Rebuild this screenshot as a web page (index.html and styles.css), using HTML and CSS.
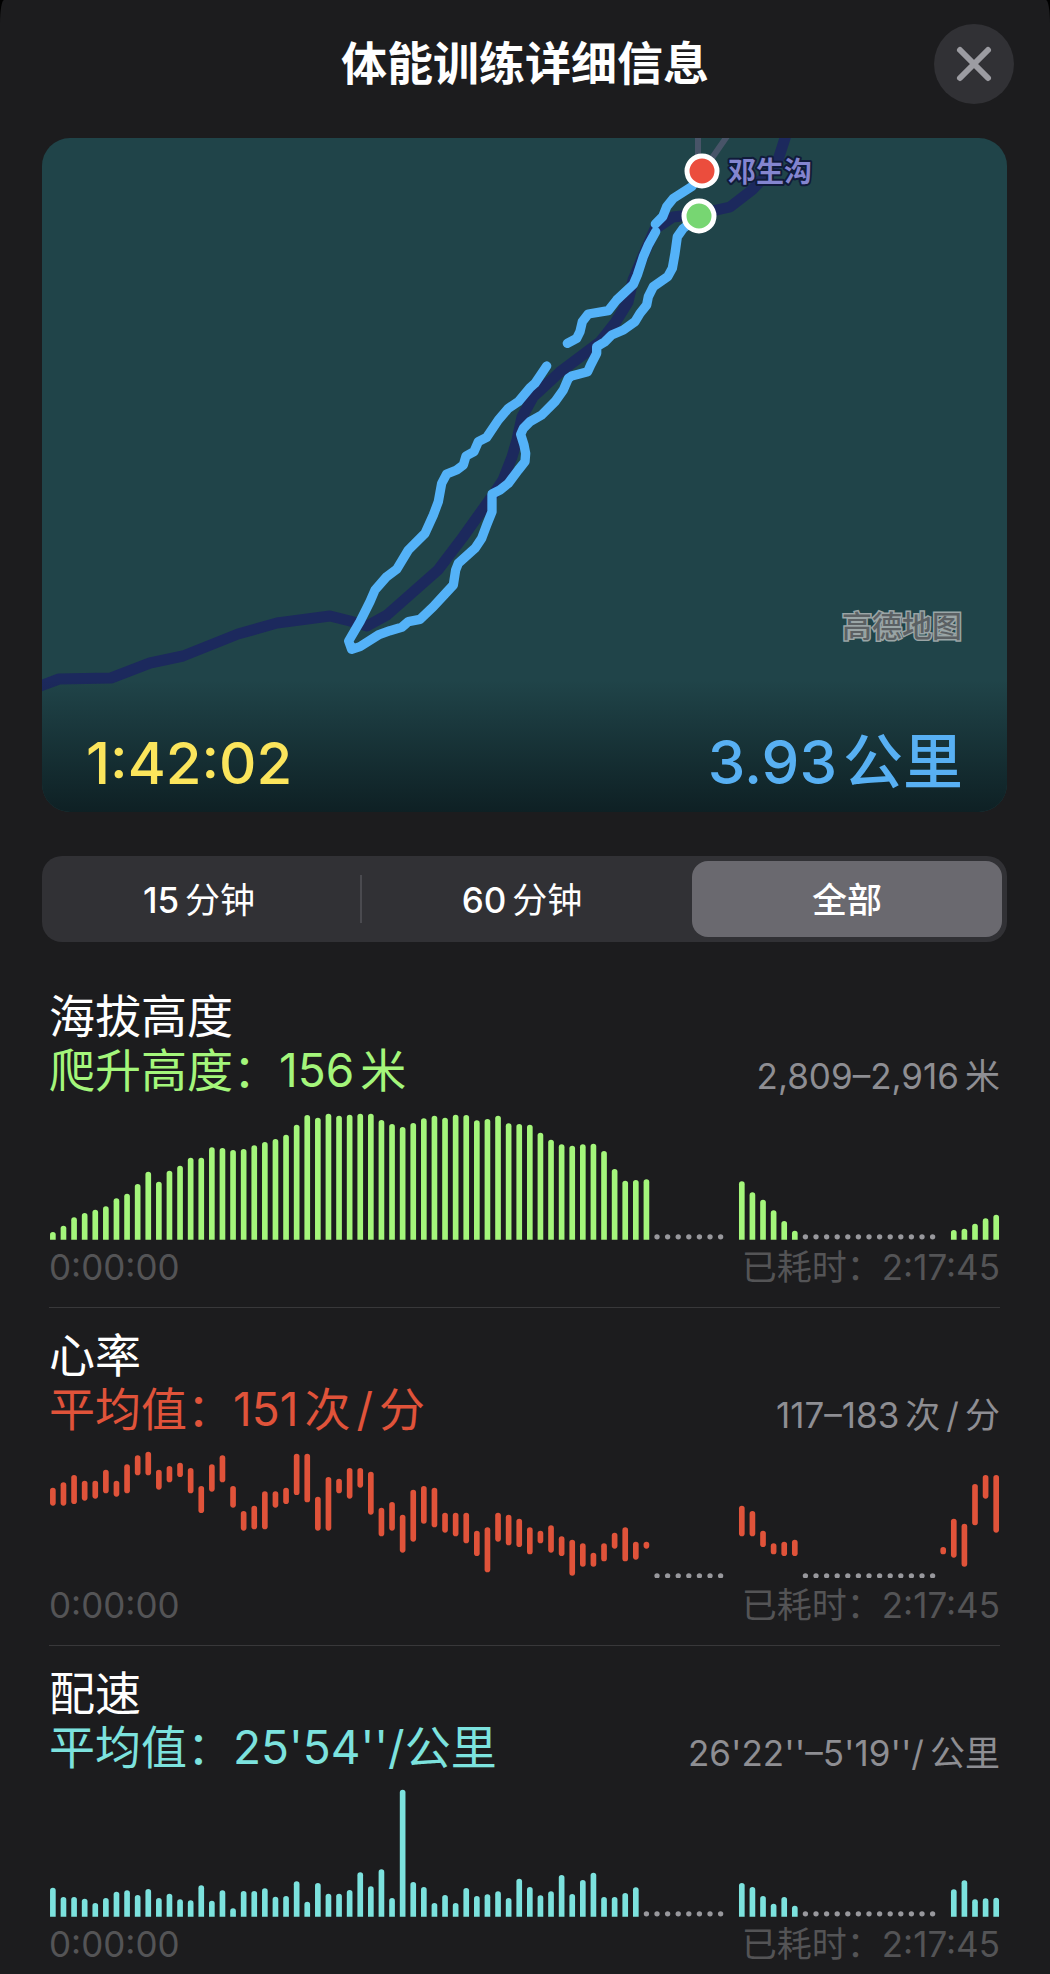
FILE: index.html
```html
<!DOCTYPE html>
<html lang="zh-CN">
<head>
<meta charset="utf-8">
<meta name="viewport" content="width=device-width, initial-scale=1">
<title>体能训练详细信息</title>
<link rel="stylesheet" href="styles.css">
</head>
<body>
<main class="sheet">
  <header class="header">
    <h1 class="header-title">体能训练详细信息</h1>
    <button class="close" type="button" aria-label="关闭">
      <svg viewBox="0 0 80 80" aria-hidden="true"><path d="M26 26 54 54M54 26 26 54"/></svg>
    </button>
  </header>

  <section class="map" aria-label="路线">
    <svg class="map-canvas" viewBox="42 138 965 674" aria-hidden="true">
      <g class="lane">
        <path d="M698 130V158M730 132 712 158"/>
      </g>
      <path class="road" d="M787 132 777 163 752 190 730 207 699 214 673 217 655 229 644 254 633 280 628 302 615 323 600 342 560 372 533 397 522 417 517 440 512 457 503 480 493 495 463 537 438 570 387 615 367 626 350 621 330 616 277 623 238 634 183 656 150 663 111 678 59 679 38 687"/>
      <g class="track" transform="translate(500 120) scale(.33333)">
        <path d="M598 288 550 325 532 350 525 400 517 445 503 470 460 500 445 530 440 555 420 580 405 605 370 630 335 645 315 665 290 680 290 700 272 735 263 755 215 768 205 775 190 810 165 845 125 885 90 905 70 925 62 943 72 975 77 1000 75 1025 55 1050 25 1090 0 1110-24 1122-24 1175-40 1215-55 1255-75 1285-125 1330-133 1350-140 1395-165 1422-200 1460-240 1498-275 1505-295 1522-330 1532-365 1545-420 1580-445 1588-454 1563-420 1505-390 1445-375 1410-340 1370-310 1348-275 1290-225 1240-200 1185-185 1145-175 1090-160 1062-130 1050-110 1035-102 1008-78 995-65 965-40 952-5 900 25 865 55 845 90 803 105 790 140 738"/>
        <path d="M202 670 230 655 240 635 247 605 265 582 325 572 350 540 400 493 412 465 430 410 445 375 467 335"/>
        <path d="M466 312 488 290 500 260 520 235 575 200 605 153"/>
      </g>
      <g class="pin">
        <circle class="pin-end" cx="702" cy="171" r="15"/>
        <circle class="pin-start" cx="699" cy="216" r="15"/>
      </g>
      <text class="place" x="728" y="182">邓生沟</text>
      <text class="credit" x="842" y="637">高德地图</text>
    </svg>
    <div class="map-stats">
      <span class="duration">1:42:02</span>
      <span class="distance">3.93<span class="unit">公里</span></span>
    </div>
  </section>

  <div class="segments" role="group" aria-label="时间范围">
    <button class="segment" type="button" aria-pressed="false">15<span class="unit">分钟</span></button>
    <button class="segment" type="button" aria-pressed="false">60<span class="unit">分钟</span></button>
    <button class="segment selected" type="button" aria-pressed="true">全部</button>
  </div>

  <section class="metric elevation">
    <h2 class="metric-title">海拔高度</h2>
    <div class="metric-row">
      <p class="metric-value">爬升高度：156<span class="unit">米</span></p>
      <p class="metric-range">2,809–2,916<span class="unit">米</span></p>
    </div>
    <svg class="chart" data-series="elevation" role="img" aria-label="海拔高度图表"></svg>
    <div class="metric-time"><span>0:00:00</span><span>已耗时：2:17:45</span></div>
  </section>

  <section class="metric heart">
    <h2 class="metric-title">心率</h2>
    <div class="metric-row">
      <p class="metric-value">平均值：151<span class="unit">次</span><span class="unit">/</span><span class="unit">分</span></p>
      <p class="metric-range">117–183<span class="unit">次</span><span class="unit">/</span><span class="unit">分</span></p>
    </div>
    <svg class="chart" data-series="heart" role="img" aria-label="心率图表"></svg>
    <div class="metric-time"><span>0:00:00</span><span>已耗时：2:17:45</span></div>
  </section>

  <section class="metric pace">
    <h2 class="metric-title">配速</h2>
    <div class="metric-row">
      <p class="metric-value">平均值：25'54''/公里</p>
      <p class="metric-range">26'22''–5'19''/<span class="unit">公里</span></p>
    </div>
    <svg class="chart" data-series="pace" role="img" aria-label="配速图表"></svg>
    <div class="metric-time"><span>0:00:00</span><span>已耗时：2:17:45</span></div>
  </section>
</main>
<script src="charts.js"></script>
</body>
</html>
```
FILE: styles.css
```css
* {
  box-sizing: border-box;
}

body {
  margin: 0;
  background: #000;
  color: #fff;
  font-family: Inter, "Noto Sans CJK SC", sans-serif;
}

h1,
h2,
p {
  margin: 0;
  font-weight: 400;
}

button {
  border: 0;
  padding: 0;
  color: inherit;
  font: inherit;
}

.sheet {
  min-height: 100vh;
  background: #1c1c1e;
  border-radius: 4px 4px 0 0 / 24px 24px 0 0;
  overflow: hidden;
}

.header {
  display: grid;
  grid-template-columns: 80px 1fr 80px;
  padding: 24px 36px 34px;
}

.header-title {
  grid-column: 2;
  text-align: center;
  font-size: 46px;
  line-height: 78px;
  font-weight: 700;
}

.close {
  width: 80px;
  height: 80px;
  border-radius: 50%;
  background: #313135;
}

.close svg {
  display: block;
  fill: none;
  stroke: #9c9ca2;
  stroke-width: 6;
  stroke-linecap: round;
}

.map {
  position: relative;
  margin: 0 43px 0 42px;
  border-radius: 28px;
  overflow: hidden;
  background: #204449;
}

.map-canvas {
  display: block;
  width: 100%;
}

.lane,
.road,
.track {
  fill: none;
  stroke-linejoin: round;
}

.lane {
  stroke: #485468;
  stroke-width: 6;
}

.road {
  stroke: #1c295d;
  stroke-width: 11;
}

.track {
  stroke: #54b2f8;
  stroke-width: 28;
  stroke-linecap: round;
}

.pin {
  stroke: #fff;
  stroke-width: 5;
}

.pin-end {
  fill: #eb4d3d;
}

.pin-start {
  fill: #77d672;
}

.place {
  font-size: 28px;
  font-weight: 700;
  fill: #8485cf;
  stroke: #101b3a;
  stroke-width: 4;
  stroke-linejoin: round;
  paint-order: stroke;
}

.credit {
  font-size: 30px;
  font-weight: 500;
  fill: #5b6063;
  stroke: #9aa5a6;
  stroke-width: 3;
  paint-order: stroke;
}

.map-stats {
  position: absolute;
  inset: auto 0 0;
  display: flex;
  justify-content: space-between;
  align-items: baseline;
  padding: 46px 44px 13px;
  font-size: 60px;
  line-height: 72px;
  font-weight: 500;
  background: linear-gradient(#20444900, #0e2024);
}

.duration {
  color: #fbe55c;
  font-size: 58px;
}

.distance {
  color: #58b0f3;
}

.unit {
  margin-left: 6px;
}

.segments {
  display: grid;
  grid-template-columns: repeat(3, 1fr);
  margin: 44px 43px 27px 42px;
  padding: 5px 5px 5px 0;
  border-radius: 20px;
  background: #313135;
}

.segment {
  position: relative;
  height: 76px;
  padding-bottom: 4px;
  background: none;
  font-size: 35px;
  font-weight: 500;
}

.segment .unit {
  font-weight: 400;
}

.segment:first-child {
  padding-right: 6px;
}

.segment:first-child::after {
  content: "";
  position: absolute;
  inset: 14px 0;
  left: auto;
  width: 2px;
  background: #4a4a4f;
}

.segment.selected {
  margin-left: 10px;
  border-radius: 16px;
  background: #6a696f;
}

.metric {
  margin: 0 50px 0 49px;
  padding: 20px 0 19px;
  border-bottom: 1px solid #38383a;
}

.metric:last-child {
  padding-bottom: 8px;
  border-bottom: 0;
}

.metric-title,
.metric-value {
  font-size: 46px;
  line-height: 54px;
}

.metric-row {
  display: flex;
  justify-content: space-between;
  align-items: flex-end;
}

.metric-range {
  color: #8e8e93;
  font-size: 35px;
  line-height: 42px;
}

.metric-time {
  display: flex;
  justify-content: space-between;
  color: #545456;
  font-size: 35px;
  line-height: 42px;
}

.chart {
  display: block;
  width: 100%;
  margin: 10px 0 6px;
  fill: currentColor;
}

.chart-gap {
  fill: #98989d;
}

.elevation .metric-value,
.elevation .chart {
  color: #a4f67b;
}

.heart .metric-value,
.heart .chart {
  color: #e0533a;
}

.pace .metric-value,
.pace .chart {
  color: #7ce2de;
}
```
FILE: charts.js
```js
// Each run is [first slot, samples]; a sample is a bar top, or [top, bottom] for a range.
// Each gap is [first slot, last slot] and is drawn as a dotted line.
const SERIES = {
  elevation: {
    baseline: 780,
    gaps: [[57, 63], [71, 83]],
    runs: [
      [0, [757, 738, 713, 700, 690, 680, 656, 642, 613, 576, 606, 573, 558, 534, 534, 503, 505, 511, 508, 497, 487, 478, 465, 435, 406, 414, 402, 408, 405, 402, 402, 421, 433, 442, 430, 416, 408, 414, 405, 406, 422, 418, 408, 431, 433, 435, 459, 480, 494, 498, 494, 492, 514, 568, 603, 601, 599]],
      [65, [605, 638, 660, 692, 724, 753]],
      [85, [751, 747, 732, 716, 705]]
    ]
  },
  heart: {
    baseline: 777,
    gaps: [[57, 63], [71, 83]],
    runs: [
      [0, [[504, 558], [488, 558], [466, 553], [483, 543], [483, 537], [450, 521], [483, 531], [434, 521], [407, 467], [396, 467], [450, 510], [439, 488], [429, 472], [445, 521], [499, 580], [434, 516], [407, 488], [499, 564], [574, 633], [558, 629], [515, 629], [515, 564], [504, 553], [402, 526], [402, 548], [531, 633], [472, 633], [477, 521], [445, 537], [445, 504], [456, 585], [564, 650], [547, 633], [585, 699], [510, 666], [499, 612], [504, 623], [579, 639], [579, 650], [579, 671], [633, 709], [623, 758], [579, 666], [585, 677], [597, 682], [623, 704], [633, 671], [617, 699], [650, 709], [660, 768], [671, 741], [699, 741], [671, 725], [639, 687], [623, 725], [666, 720], [666, 687]]],
      [65, [[558, 650], [574, 650], [633, 682], [671, 704], [666, 709], [660, 709]]],
      [84, [[682, 704], [597, 714], [612, 741], [493, 617], [466, 537], [466, 639]]]
    ]
  },
  pace: {
    baseline: 803,
    gaps: [[56, 63], [71, 83]],
    runs: [
      [0, [716, 744, 744, 749, 762, 747, 728, 724, 738, 720, 747, 734, 751, 754, 709, 755, 724, 778, 726, 726, 718, 743, 741, 697, 758, 702, 734, 734, 723, 670, 712, 661, 747, 422, 699, 714, 762, 738, 762, 717, 741, 736, 727, 747, 689, 714, 739, 727, 678, 735, 693, 671, 744, 744, 732, 715]],
      [65, [702, 714, 741, 764, 744, 770]],
      [85, [721, 694, 751, 748, 746]]
    ]
  }
};

const NS = "http://www.w3.org/2000/svg";
const PITCH = 31.8;
const RADIUS = 8.5;
const INSET = 3;
const HEIGHT = 398;

function add(svg, name, attributes) {
  const node = document.createElementNS(NS, name);
  for (const key in attributes) node.setAttribute(key, attributes[key]);
  svg.append(node);
}

for (const svg of document.querySelectorAll(".chart")) {
  const series = SERIES[svg.dataset.series];
  const base = series.baseline;
  svg.setAttribute("viewBox", `0 ${base - HEIGHT} 2853 ${HEIGHT}`);

  for (const [first, samples] of series.runs) {
    samples.forEach((sample, i) => {
      const [top, bottom] = Array.isArray(sample) ? sample : [sample, base];
      const x = (first + i) * PITCH + INSET;
      const end = bottom === base
        ? `V${base}h${2 * RADIUS}V${top + RADIUS}`
        : `V${bottom - RADIUS}a${RADIUS} ${RADIUS} 0 0 0 ${2 * RADIUS} 0V${top + RADIUS}`;
      add(svg, "path", { d: `M${x} ${top + RADIUS}${end}a${RADIUS} ${RADIUS} 0 0 0 ${-2 * RADIUS} 0Z` });
    });
  }

  for (const [first, last] of series.gaps) {
    for (let slot = first; slot <= last; slot++) {
      add(svg, "circle", { class: "chart-gap", cx: slot * PITCH + INSET + RADIUS, cy: base - RADIUS, r: 8 });
    }
  }
}
```
